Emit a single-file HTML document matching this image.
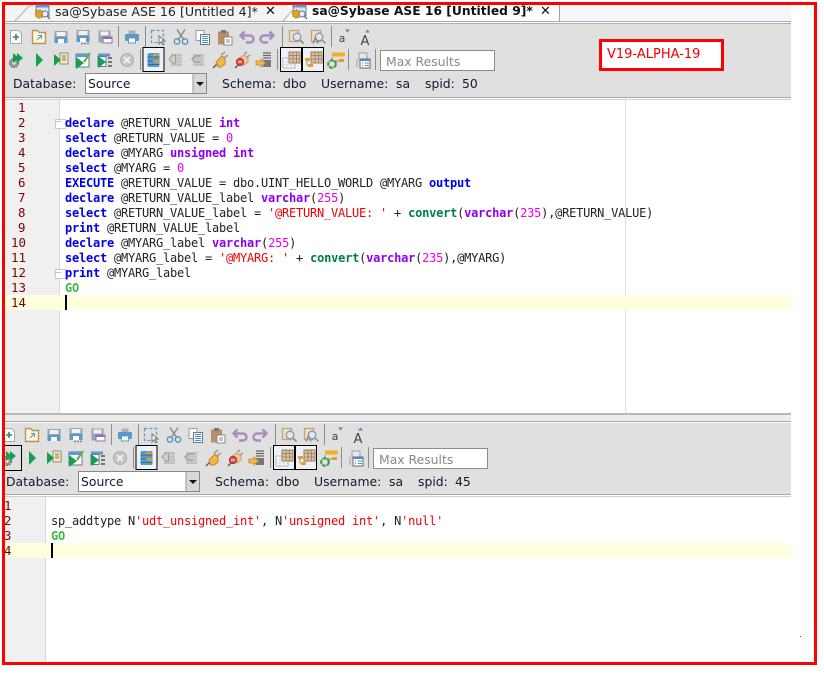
<!DOCTYPE html>
<html><head><meta charset="utf-8"><style>
html,body{margin:0;padding:0;background:#fff}
body{width:824px;height:674px;position:relative;overflow:hidden;font-family:"DejaVu Sans","Liberation Sans",sans-serif;font-size:12px;color:#1a1a33}
.a{position:absolute;white-space:pre}
.t{position:absolute;white-space:pre;font-size:12.4px;line-height:15px;color:#111a33}
.c{position:absolute;white-space:pre;font-family:"DejaVu Sans Mono","Liberation Mono",monospace;font-size:12px;letter-spacing:-.224px;line-height:15px;color:#222}
.n{position:absolute;white-space:pre;font-family:"DejaVu Sans Mono","Liberation Mono",monospace;font-size:12.4px;line-height:15px;color:#800000}
b.k{color:#0000f0}b.p{color:#9000f0}b.g{color:#40b848}i{font-style:normal}i.s{color:#f00000}i.m{color:#f000f0}
</style></head><body>
<!-- tab bar -->
<div class="a" style="left:5px;top:5px;width:786px;height:16px;background:#f5f6fb"></div>
<div class="a" style="left:5px;top:5px;width:283px;height:16px;background:#f4f4f4"></div>
<div class="a" style="left:288px;top:5px;width:272px;height:16px;background:#fff"></div>
<div class="a" style="left:5px;top:21px;width:786px;height:1px;background:#a8a8a8"></div>
<div class="a" style="left:5px;top:22px;width:786px;height:1px;background:#fff"></div>
<div class="a" style="left:5px;top:23px;width:786px;height:1px;background:#b0b0b0"></div>
<div class="a" style="left:559px;top:5px;width:1px;height:16px;background:#a0a0a0"></div>
<div class="t" style="left:55px;top:4px;font-size:12.6px;color:#222">sa@Sybase ASE 16 [Untitled 4]*</div>
<div class="t" style="left:312px;top:4px;font-size:12.3px;font-weight:bold;color:#111">sa@Sybase ASE 16 [Untitled 9]*</div>
<div class="t" style="left:265px;top:4px;font-size:13px;font-weight:bold;color:#111">✕</div>
<div class="t" style="left:540px;top:4px;font-size:13px;font-weight:bold;color:#111">✕</div>
<!-- top toolbar bg -->
<div class="a" style="left:5px;top:24px;width:786px;height:73px;background:#e0e0e0"></div>
<div class="a" style="left:5px;top:97px;width:786px;height:1px;background:#a8a8a8"></div>
<div class="a" style="left:5px;top:99px;width:786px;height:1px;background:#d0d0d0"></div>
<!-- top editor -->
<div class="a" style="left:5px;top:100px;width:54px;height:313px;background:#f0f0f0"></div>
<div class="a" style="left:59px;top:100px;width:1px;height:313px;background:#d8d8d8"></div>
<div class="a" style="left:625px;top:100px;width:1px;height:313px;background:#e0e0e0"></div>
<div class="a" style="left:5px;top:295px;width:786px;height:15px;background:#ffffe0"></div>
<div class="a" style="left:65px;top:295px;width:2px;height:15px;background:#000"></div>
<div class="a" style="left:55px;top:119px;width:9px;height:8px;background:#fff;border:1px solid #c8c8c8"></div>
<div class="a" style="left:55px;top:269px;width:9px;height:8px;background:#fff;border:1px solid #c8c8c8"></div>
<div class="n" style="left:18px;top:100px">1
2
3
4
5
6
7
8
9</div>
<div class="n" style="left:11px;top:235px">10
11
12
13
14</div>
<div class="c" style="left:65px;top:116px"><b class="k">declare</b> @RETURN_VALUE <b class="p">int</b>
<b class="k">select</b> @RETURN_VALUE = <i class="m">0</i>
<b class="k">declare</b> @MYARG <b class="p">unsigned int</b>
<b class="k">select</b> @MYARG = <i class="m">0</i>
<b class="k">EXECUTE</b> @RETURN_VALUE = dbo.UINT_HELLO_WORLD @MYARG <b class="k">output</b>
<b class="k">declare</b> @RETURN_VALUE_label <b class="p">varchar</b>(<i class="m">255</i>)
<b class="k">select</b> @RETURN_VALUE_label = <i class="s">'@RETURN_VALUE: '</i> + <b class="g" style="color:#008040">convert</b>(<b class="p">varchar</b>(<i class="m">235</i>),@RETURN_VALUE)
<b class="k">print</b> @RETURN_VALUE_label
<b class="k">declare</b> @MYARG_label <b class="p">varchar</b>(<i class="m">255</i>)
<b class="k">select</b> @MYARG_label = <i class="s">'@MYARG: '</i> + <b class="g" style="color:#008040">convert</b>(<b class="p">varchar</b>(<i class="m">235</i>),@MYARG)
<b class="k">print</b> @MYARG_label
<b class="g">GO</b></div>
<!-- divider -->
<div class="a" style="left:5px;top:413px;width:786px;height:2px;background:#b8b8b8"></div>
<div class="a" style="left:5px;top:415px;width:786px;height:6px;background:#ececec"></div>
<div class="a" style="left:5px;top:421px;width:786px;height:1px;background:#a8a8a8"></div>
<!-- lower toolbar -->
<div class="a" style="left:5px;top:423px;width:786px;height:71px;background:#e0e0e0"></div>
<div class="a" style="left:5px;top:494px;width:786px;height:1px;background:#a8a8a8"></div>
<div class="a" style="left:5px;top:496px;width:786px;height:1px;background:#d0d0d0"></div>
<!-- lower editor -->
<div class="a" style="left:5px;top:497px;width:40px;height:165px;background:#f0f0f0"></div>
<div class="a" style="left:45px;top:497px;width:1px;height:165px;background:#d8d8d8"></div>
<div class="a" style="left:5px;top:543px;width:786px;height:15px;background:#ffffe0"></div>
<div class="a" style="left:51px;top:543px;width:2px;height:15px;background:#000"></div>
<div class="n" style="left:4px;top:498px">1
2
3
4</div>
<div class="c" style="left:51px;top:514px">sp_addtype N<i class="s">'udt_unsigned_int'</i>, N<i class="s">'unsigned int'</i>, N<i class="s">'null'</i>
<b class="g">GO</b></div>
<!-- icons -->
<svg class="a" style="left:0;top:0" width="824" height="674" viewBox="0 0 824 674">
<defs>
<g id="floppy"><rect x="-6.5" y="-6" width="13" height="12" fill="#98a4ae"/><rect x="-4.5" y="-5" width="9" height="4" fill="#eef2f5"/><rect x="-6.5" y="0" width="13" height="6" fill="#5b9ac6"/><rect x="-3" y="2" width="6" height="4" fill="#fff"/></g>
<g id="bar"><rect width="1" height="21" fill="#8c8c8c"/></g>
<g id="grid"><rect x="-2" y="-8" width="11" height="11" fill="#d9c3a6" stroke="#9a7c58"/><path d="M2-8v11M5.500-8v11M-2-4.500h11M-2-1h11" stroke="#9a7c58" stroke-width=".8"/></g>
<g id="tb">
 <!-- row 1 -->
 <g transform="translate(16,37)"><path d="M-5.500-6.500h8l3 3v10h-11z" fill="#fff" stroke="#a8a8a8"/><path d="M0-3v6M-3 0h6" stroke="#1f9a45" stroke-width="1.600"/></g>
 <g transform="translate(39,37)"><path d="M-6.500-6.500h5l2 2h6v11h-13z" fill="#fdf6d8" stroke="#b8925a" stroke-width="1.400"/><path d="M-2 3l4-4M-1-1.500h3.500v3.500" stroke="#4a9ad0" fill="none"/></g>
 <use href="#floppy" transform="translate(61,37)"/>
 <g transform="translate(83,37)"><use href="#floppy" transform="translate(0,-1)"/><path d="M-2 6.500h9" stroke="#9a6ab8" stroke-width="1.600" stroke-dasharray="2 1"/></g>
 <g transform="translate(105,37)"><rect x="-6.500" y="-6.500" width="12" height="12" fill="#98a4ae"/><rect x="-4.500" y="-5.500" width="8" height="4" fill="#eef2f5"/><rect x="-2" y="0" width="9" height="6" fill="#fff" stroke="#9a6ab8"/><rect x="-2" y="0" width="9" height="2" fill="#9a6ab8"/></g>
 <use href="#bar" transform="translate(118,26)"/>
 <g transform="translate(132,37)"><rect x="-3.500" y="-6.500" width="7" height="4" fill="#a8b0b8"/><rect x="-7" y="-3" width="14" height="7" rx="1" fill="#5b9ac6"/><rect x="-3.500" y="1" width="7" height="5" fill="#fff" stroke="#5b9ac6"/></g>
 <use href="#bar" transform="translate(145,26)"/>
 <g transform="translate(158,37)"><rect x="-6.500" y="-6.500" width="12" height="12" fill="none" stroke="#5a9ad0" stroke-width="1.300" stroke-dasharray="3 2"/><path d="M1-1l0 8 2-2 2 3 1-1-2-3h3z" fill="#fff" stroke="#777"/></g>
 <g transform="translate(181,37)" fill="none"><path d="M-4-7.500L3 3M4-7.500L-3 3" stroke="#8a8a8a" stroke-width="1.500"/><circle cx="-4" cy="4.500" r="2.700" stroke="#4d8fc0" stroke-width="1.300"/><circle cx="4" cy="4.500" r="2.700" stroke="#4d8fc0" stroke-width="1.300"/></g>
 <g transform="translate(203,37)"><rect x="-7" y="-6.500" width="8" height="10" fill="#fff" stroke="#8aa0b0"/><rect x="-2.500" y="-2.500" width="9" height="10" fill="#fff" stroke="#5a7a98"/><path d="M-1-.5h6M-1 1.500h6M-1 3.500h6M-1 5.500h6" stroke="#4d8fc0"/></g>
 <g transform="translate(225,37)"><rect x="-7" y="-5.500" width="11" height="13" fill="#b98f68"/><rect x="-4" y="-7" width="5" height="3" fill="#777"/><rect x="-1" y="0" width="8" height="8" fill="#fff" stroke="#8a8a8a"/><path d="M1 3h4M1 5h4" stroke="#8a8a8a"/></g>
 <path d="M244.500 31.500L240.500 35.500L244.500 39.500M241 35.500H249.500C252.500 35.500 253.500 37.500 253.500 39C253.500 41 252 42.500 249.500 42.500H246" fill="none" stroke="#ab8cc0" stroke-width="2.400"/>
 <path d="M269.500 31.500L273.500 35.500L269.500 39.500M273 35.500H264.500C261.500 35.500 260.500 37.500 260.500 39C260.500 41 262 42.500 264.500 42.500H268" fill="none" stroke="#ab8cc0" stroke-width="2.400"/>
 <use href="#bar" transform="translate(282,26)"/>
 <g transform="translate(296,37)"><rect x="-6.500" y="-6.500" width="9" height="11" fill="#ebe0d2" stroke="#c8a078" stroke-width="1.300"/><circle cx="1" cy="0" r="3.800" fill="#dfe8ee" stroke="#8a9aa6" stroke-width="1.300"/><path d="M4 3l3.500 3.500" stroke="#8a8a8a" stroke-width="1.800"/></g>
 <g transform="translate(318,37)"><rect x="-6.500" y="-6.500" width="9" height="11" fill="#ebe0d2" stroke="#c8a078" stroke-width="1.300"/><circle cx="1" cy="0" r="3.800" fill="#dfe8ee" stroke="#8a9aa6" stroke-width="1.300"/><path d="M4 3l3.500 3.500M-5 6.500l2.500-6 2.500 6" stroke="#8a8a8a" stroke-width="1.400" fill="none"/></g>
 <use href="#bar" transform="translate(331,26)"/>
 <text x="342" y="42" font-family="DejaVu Sans,sans-serif" font-size="11" fill="#444" text-anchor="middle">a</text>
 <path d="M345 29.500h5l-2.500 3z" fill="#4d8fc0"/>
 <text x="365" y="45" font-family="DejaVu Sans,sans-serif" font-size="13" fill="#444" text-anchor="middle">A</text>
 <path d="M365 32.500h5l-2.500-3z" fill="#4d8fc0"/>
 <!-- row 2 -->
 <g transform="translate(15,60)"><circle cx="-1" cy="3" r="4.500" fill="#999" stroke="#666" stroke-dasharray="2 1"/><circle cx="-1" cy="3" r="1.700" fill="#e0e0e0"/><path d="M-2-7l6 5-6 5zM2-7l6 5-6 5z" fill="#15a050"/></g>
 <path d="M36 53l7 7-7 7z" fill="#15a050"/>
 <g transform="translate(61,60)"><rect x="-1" y="-7" width="8" height="11" fill="#fbeeb0" stroke="#888"/><path d="M1-4h4M1-2h4M1 0h4" stroke="#777"/><path d="M-7-6l7 6-7 6z" fill="#15a050"/></g>
 <g transform="translate(83,60)"><rect x="-7" y="-6" width="13" height="13" fill="#fff" stroke="#5a7a98"/><rect x="-7" y="-6" width="13" height="3" fill="#5a9ad0"/><path d="M-7-3l8 6-8 6z" fill="#15a050"/><path d="M1 2L7-7" stroke="#6ab04a" stroke-width="2.200"/></g>
 <g transform="translate(105,60)"><rect x="-7" y="-6.500" width="12" height="3" fill="#5a9ad0"/><rect x="-7" y="-3.500" width="8" height="10" fill="#fff" stroke="#5a7a98"/><path d="M-7-4l8 6-8 6z" fill="#15a050"/><path d="M3-3h4v2h-4zM3 1h4v2h-4zM3 5h4v2h-4z" fill="#777"/></g>
 <g transform="translate(127,60)"><circle r="6.500" fill="#c4c4c4" stroke="#b0b0b0"/><path d="M-3-3l6 6M3-3l-6 6" stroke="#f4f4f4" stroke-width="1.800"/></g>
 <use href="#bar" transform="translate(140,49)"/>
 <g transform="translate(154,60)"><rect x="-11" y="-12.500" width="21" height="24" fill="#eef1f8" stroke="#000"/><rect x="-6.500" y="-7" width="12" height="14" rx="1.500" fill="#5a9ad0"/><path d="M-6.500-3h12M-6.500 1h12M-6.500 4.500h12" stroke="#2a6a9a"/><path d="M5-4.500h-5l2-2M-1 1h5l-2 2" stroke="#e8a020" stroke-width="1.800" fill="none"/></g>
 <g transform="translate(176,60)"><rect x="-5" y="-6" width="11" height="12" fill="#c0c0c0"/><path d="M-5-3h11M-5 0h11M-5 3h11" stroke="#d4d4d4"/><path d="M-7-1l3.500-4h3v8h-3z" fill="#d0d0d0" stroke="#a0a0a0"/></g>
 <g transform="translate(198,60)"><rect x="-5" y="-6" width="11" height="12" fill="#c0c0c0"/><path d="M-5-3h11M-5 0h11M-5 3h11" stroke="#d4d4d4"/><path d="M3-4h-6l-3 3 3 3h5" fill="none" stroke="#a0a0a0" stroke-width="1.400"/></g>
 <g transform="translate(220,60)"><path d="M-7 8l4-4" stroke="#555" stroke-width="1.300"/><path d="M-4 2l6-6 3 3 0 5-4 3h-3z" fill="#f4b840" stroke="#b88830"/><path d="M1-5l4-3M4-2l4-3" stroke="#999" stroke-width="1.500"/></g>
 <g transform="translate(242,60)"><path d="M-7 8l4-4" stroke="#555" stroke-width="1.300"/><path d="M-3-2l5-3 4 3 0 4-4 3-5-1z" fill="#eec890" stroke="#c8a070"/><path d="M2-6l3-2M5-3l3-2" stroke="#999" stroke-width="1.500"/><circle cx="-2" cy="2" r="3.600" fill="#e05050" stroke="#a03030"/><path d="M-4 2h4" stroke="#fff"/></g>
 <g transform="translate(264,60)"><path d="M-1-7h8M-1-4.500h8M-1-2h8" stroke="#666" stroke-width="1.300"/><rect x="-1" y="0" width="8" height="7" fill="#777"/><path d="M-8 1h5v-2l4.500 4-4.500 4V5l-5 0z" fill="#f4b840" stroke="#b88830" stroke-width=".8"/></g>
 <use href="#bar" transform="translate(277,49)"/>
 <g transform="translate(291,60)"><rect x="-10.500" y="-12.500" width="21" height="24" fill="#eef1f8" stroke="#000"/><rect x="-8" y="-2" width="12" height="10" fill="#fff" stroke="#a0b8c8"/><path d="M-8 2h12M-8 5h12M-4-2v10M0-2v10" stroke="#c0d0dc" stroke-width=".8"/><use href="#grid"/></g>
 <g transform="translate(313,60)"><rect x="-10.500" y="-12.500" width="21" height="24" fill="#eef1f8" stroke="#000"/><use href="#grid"/><rect x="-8" y="-2" width="5" height="3" fill="#e8a020"/><rect x="-5" y="4" width="5" height="3" fill="#e8a020"/><path d="M-6 1v4.500" stroke="#888"/></g>
 <g transform="translate(336,60)"><rect x="-4" y="-7.500" width="13" height="4" fill="#f0b020"/><rect x="3" y="-1" width="5" height="3" fill="#e8a020"/><path d="M-4-3v4h7" stroke="#888" fill="none"/><circle cx="-4" cy="4" r="3.800" fill="none" stroke="#3a9a40" stroke-width="2" stroke-dasharray="4 1"/></g>
 <use href="#bar" transform="translate(348,49)"/>
 <g transform="translate(362,60)"><path d="M-3-7h8v6h-8zM-5 7V-1" stroke="#a0a0a0" fill="#e8e8e8"/><rect x="-2" y="-1" width="10" height="9" fill="#fff" stroke="#667"/><rect x="-2" y="-1" width="10" height="2" fill="#4d8fc0"/><path d="M0 3h1M3 3h4M0 5.500h1M3 5.500h4" stroke="#4d8fc0"/></g>
 <use href="#bar" transform="translate(375,49)"/>
 <rect x="380.500" y="50.500" width="114" height="20" fill="#fff" stroke="#8c8c8c"/>
 <!-- combo -->
 <rect x="85.500" y="73.500" width="121" height="20" fill="#fff" stroke="#888"/>
 <rect x="193" y="74" width="13" height="19" fill="#d8d8d8"/>
 <path d="M193 74v19" stroke="#999"/>
 <path d="M196 82h8l-4 4z" fill="#111"/>
</g>
</defs>
<use href="#tb"/>
<use href="#tb" transform="translate(-7,398)"/>
<rect x="3.500" y="445.500" width="18" height="25" fill="none" stroke="#000"/>
<!-- red annotations -->
<rect x="600" y="40" width="123" height="29" fill="#fff"/>
<rect x="600.500" y="40.500" width="122" height="29" fill="none" stroke="#f00" stroke-width="3"/>
<rect x="3.500" y="3.500" width="812" height="660" fill="none" stroke="#f00" stroke-width="3"/>
<rect x="800" y="636" width="1" height="1" fill="#f00"/>
<rect x="18" y="2" width="82" height="1" fill="#f00"/>
<!-- tab icons -->
<g transform="translate(43,12)"><rect x="-7" y="-7" width="13" height="11" fill="#dde6ee" stroke="#5a7a98"/><rect x="-7" y="-7" width="13" height="2.500" fill="#5a9ad0"/><circle cx="-3.500" cy="2" r="4" fill="#e8a020" stroke="#a87820" stroke-dasharray="2 1"/><circle cx="2" cy="2" r="3" fill="#eef" stroke="#778"/><path d="M4 4l3 3" stroke="#778" stroke-width="1.500"/></g>
<g transform="translate(300,12)"><rect x="-7" y="-7" width="13" height="11" fill="#dde6ee" stroke="#5a7a98"/><rect x="-7" y="-7" width="13" height="2.500" fill="#5a9ad0"/><circle cx="-3.500" cy="2" r="4" fill="#e8a020" stroke="#a87820" stroke-dasharray="2 1"/><circle cx="2" cy="2" r="3" fill="#eef" stroke="#778"/><path d="M4 4l3 3" stroke="#778" stroke-width="1.500"/></g>
<path d="M15 21L29 6h4M283 21l13-15" stroke="#b0b0b0" fill="none"/>
<path d="M55 121.500h6" stroke="#c0c0c0"/><path d="M55 272.500h6" stroke="#c0c0c0"/>
</svg>
<!-- text rows -->
<div class="t" style="left:386px;top:54px;color:#888">Max Results</div>
<div class="t" style="left:379px;top:452px;color:#888">Max Results</div>
<div class="t" style="left:13px;top:76px">Database:</div>
<div class="t" style="left:88px;top:76px">Source</div>
<div class="t" style="left:222px;top:76px">Schema:</div>
<div class="t" style="left:283px;top:76px">dbo</div>
<div class="t" style="left:321px;top:76px">Username:</div>
<div class="t" style="left:396px;top:76px">sa</div>
<div class="t" style="left:425px;top:76px">spid:</div>
<div class="t" style="left:462px;top:76px">50</div>
<div class="t" style="left:6px;top:474px">Database:</div>
<div class="t" style="left:81px;top:474px">Source</div>
<div class="t" style="left:215px;top:474px">Schema:</div>
<div class="t" style="left:276px;top:474px">dbo</div>
<div class="t" style="left:314px;top:474px">Username:</div>
<div class="t" style="left:389px;top:474px">sa</div>
<div class="t" style="left:418px;top:474px">spid:</div>
<div class="t" style="left:455px;top:474px">45</div>
<div class="t" style="left:607px;top:47px;color:#f00000;font-size:13px">V19-ALPHA-19</div>
</body></html>
